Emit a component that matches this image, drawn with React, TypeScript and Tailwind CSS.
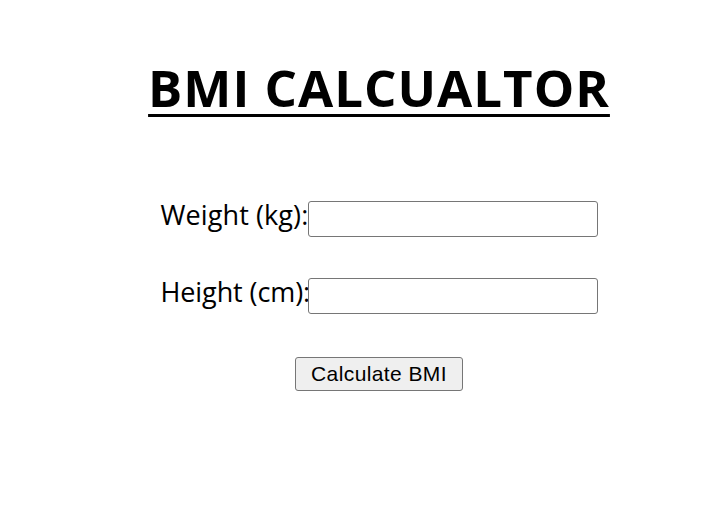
export default function App() {
  return (
    <div className="flex min-h-[520px] flex-col items-center bg-white pl-[31px] font-['Open_Sans',sans-serif] text-black">
      <h1 className="mt-[52px] text-[51px] font-bold leading-[70px] tracking-[1px] underline decoration-[3px] underline-offset-[7px]">
        BMI CALCUALTOR
      </h1>

      <form className="mt-[79px] flex flex-col items-center" onSubmit={(e) => e.preventDefault()}>
        <div className="flex items-start">
          <label className="w-[147px] whitespace-nowrap text-[27px] leading-[28px] tracking-[0.1px]">Weight (kg):</label>
          <input className="h-[36px] w-[290px] rounded-[3px] border border-[#767676] px-1 text-[16px]" />
        </div>
        <div className="mt-[41px] flex items-start">
          <label className="w-[147px] whitespace-nowrap text-[27px] leading-[28px] tracking-[-0.1px]">Height (cm):</label>
          <input className="h-[36px] w-[290px] rounded-[3px] border border-[#767676] px-1 text-[16px]" />
        </div>
        <button
          type="submit"
          className="mt-[43px] h-[34px] rounded-[3px] border border-[#767676] bg-[#efefef] px-[15px] font-['Liberation_Sans',Arial,sans-serif] text-[21px] tracking-[0.4px]"
        >
          Calculate BMI
        </button>
      </form>
    </div>
  )
}
